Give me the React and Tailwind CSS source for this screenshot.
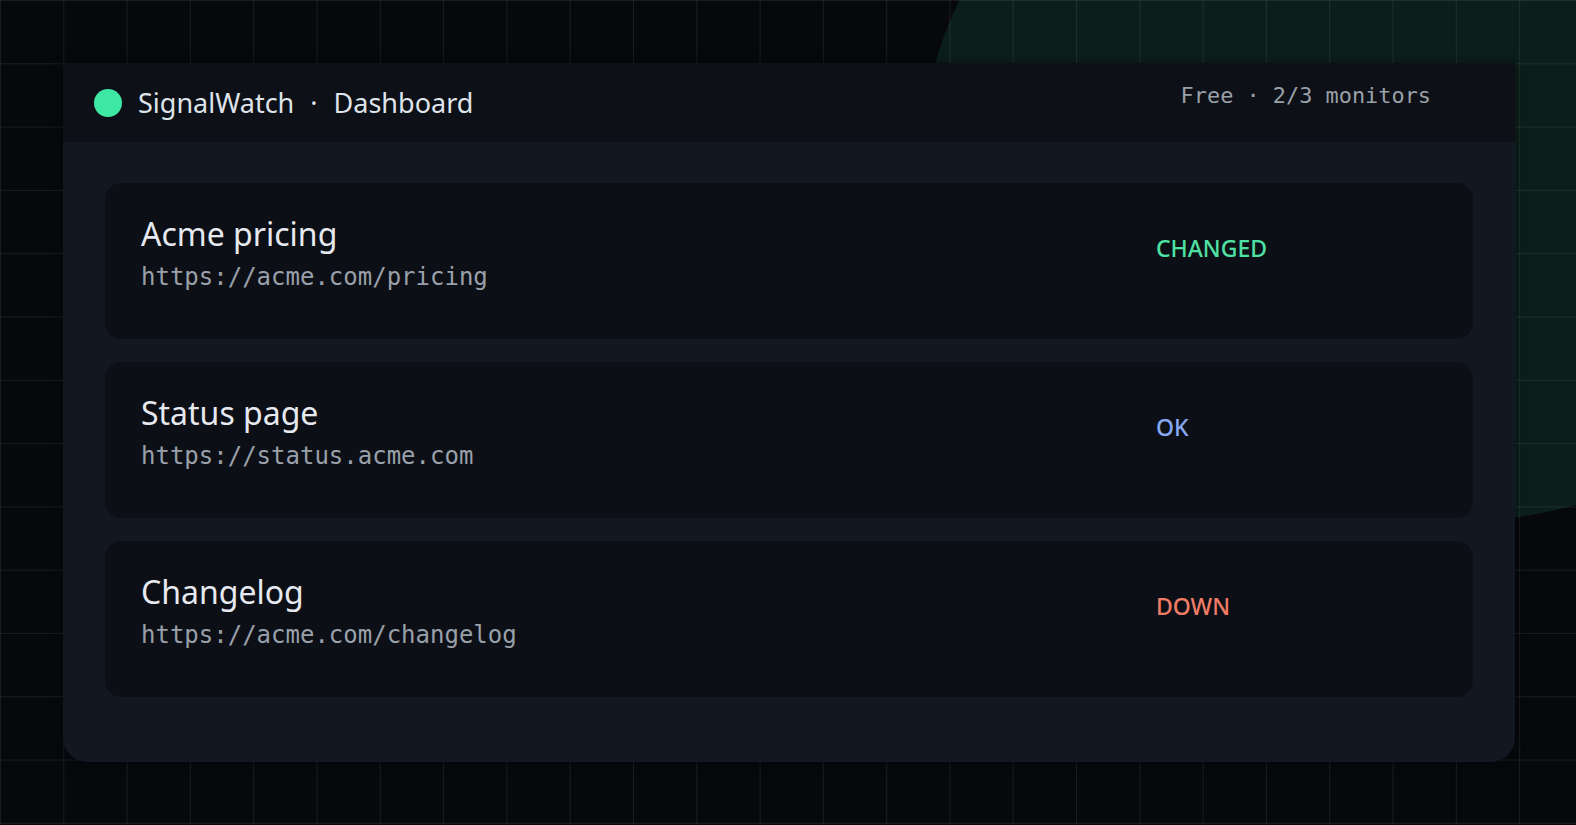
import React from "react";

const monitors = [
  { name: "Acme pricing", url: "https://acme.com/pricing", status: "CHANGED", tone: "text-[#4fe0a4]" },
  { name: "Status page", url: "https://status.acme.com", status: "OK", tone: "text-[#86a8f2]" },
  { name: "Changelog", url: "https://acme.com/changelog", status: "DOWN", tone: "text-[#f07c66]" },
];

function MonitorCard({ name, url, status, tone }) {
  return (
    <div className="grid grid-cols-[1fr_281px] items-center rounded-[16px] bg-[#0c0f16] pl-[36px] pr-[36px] pt-[31px] pb-[46px]">
      <div className="flex flex-col">
        <div className="text-[32px] leading-[40px] text-[#e6e9ef] font-['Noto_Sans',sans-serif]">
          {name}
        </div>
        <div className="mt-[7px] text-[24px] leading-[32px] text-[#9aa0a9] font-['DejaVu_Sans_Mono',monospace]">
          {url}
        </div>
      </div>
      <div className={`mb-[12px] text-[23px] leading-[30px] font-medium font-['Noto_Sans',sans-serif] ${tone}`}>
        {status}
      </div>
    </div>
  );
}

export default function App() {
  return (
    <div className="relative h-[825px] w-[1576px] overflow-hidden bg-[#07080c]">
      {/* green glow behind the panel */}
      <div className="absolute left-[922px] top-[-200px] h-[720px] w-[910px] rounded-full bg-[#0b1e19]" />

      {/* grid */}
      <div className="absolute inset-0 bg-[linear-gradient(to_right,rgba(255,255,255,0.08)_1px,transparent_1px),linear-gradient(to_bottom,rgba(255,255,255,0.08)_1px,transparent_1px)] bg-[size:63.3px_63.3px]" />

      <div className="relative pl-[63px] pt-[63px]">
        <div className="w-[1452px] overflow-hidden rounded-b-[24px] bg-[#121722] shadow-[0_0_12px_rgba(0,0,0,0.35)]">
          {/* Header */}
          <div className="flex h-[79px] items-center justify-between bg-[#0d1017] pl-[31px] pr-[84px]">
            <div className="flex items-center">
              <span className="h-[28px] w-[28px] rounded-full bg-[#3ee8a4]" />
              <div className="ml-[16px] flex items-center text-[27px] leading-[36px] text-[#dfe3ea] font-['Noto_Sans',sans-serif]">
                <span>SignalWatch</span>
                <span className="px-[16px]">·</span>
                <span>Dashboard</span>
              </div>
            </div>
            <div className="mb-[14px] text-[21.9px] leading-[28px] text-[#9aa0a8] font-['DejaVu_Sans_Mono',monospace]">
              Free · 2/3 monitors
            </div>
          </div>

          {/* Body */}
          <div className="flex flex-col gap-[23px] px-[42px] pt-[41px] pb-[65px]">
            {monitors.map((m) => (
              <MonitorCard key={m.name} {...m} />
            ))}
          </div>
        </div>
      </div>
    </div>
  );
}
